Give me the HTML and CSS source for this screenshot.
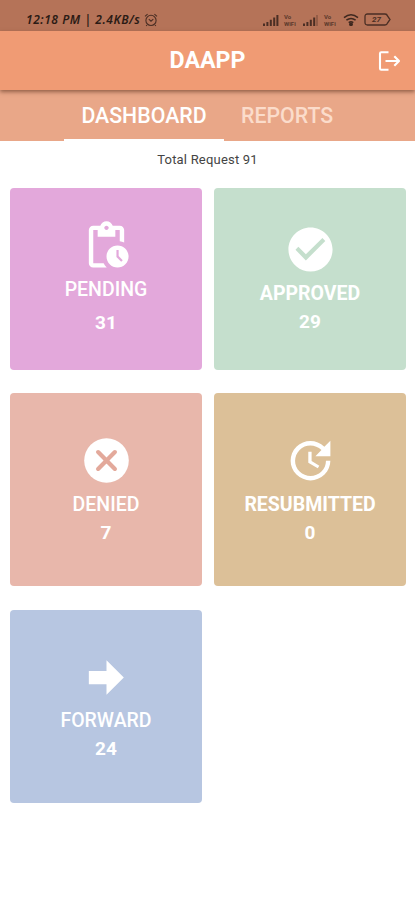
FILE: index.html
```html
<!DOCTYPE html>
<html lang="en">
<head>
<meta charset="utf-8">
<title>DAAPP</title>
<link rel="stylesheet" href="styles.css">
</head>
<body>
<div class="status">
  <span class="clock">12:18 PM | 2.4KB/s</span>
  <svg class="alarm" viewBox="0 0 14 14"><circle cx="7" cy="7.4" r="5.1"/><path d="M1 3.4 3.6 1.2M13 3.4 10.4 1.2M4.8 6.2 7 8.2 9.3 6.2M3 12 2.2 13M11 12l.8 1"/></svg>
  <div class="signals">
    <svg class="bars" viewBox="0 0 16 12"><path d="M0 9.5h2V12H0zM3.4 8h2v4h-2zM6.8 5.8h2V12h-2zM10.2 3.4h2V12h-2zM13.4 1h2v11h-2z"/></svg>
    <span class="vo"><span>Vo</span><span>WiFi</span></span>
    <svg class="bars" viewBox="0 0 16 12"><path d="M0 9.5h2V12H0zM3.4 8h2v4h-2zM6.8 5.8h2V12h-2zM10.2 3.4h2V12h-2z"/><path opacity=".5" d="M13.4 1h1.2v11h-1.2z"/></svg>
    <span class="vo"><span>Vo</span><span>WiFi</span></span>
    <svg class="wifi" viewBox="0 0 16 13"><path d="M1 4.6Q8-1.2 15 4.6M3.4 7.2q4.6-3.6 9.2 0M5.7 9.6q2.3-1.7 4.6 0"/><circle cx="8" cy="11.2" r="1.2"/></svg>
    <svg class="battery" viewBox="0 0 27 13"><path d="M3.5 1h17.500q2 0 2.500 2l2.500 3.500-2.500 3.500q-.5 2-2.500 2H3.500Q1 12 1 9.500v-6Q1 1 3.500 1z"/><text x="12.500" y="9.300" text-anchor="middle">27</text></svg>
  </div>
</div>
<header class="appbar">
  <h1>DAAPP</h1>
  <svg class="logout" viewBox="0 0 24 22"><path d="M11.500 2.200H4.200q-1.200 0-1.200 1.200v15.200q0 1.200 1.200 1.200h7.300M8.500 11h13M17.300 6.200 22 11l-4.700 4.800"/></svg>
</header>
<nav class="tabs">
  <a class="tab active">DASHBOARD</a>
  <a class="tab reports">REPORTS</a>
</nav>
<p class="total">Total Request 91</p>
<main class="grid">
  <section class="card pending">
    <svg class="icon" viewBox="0 0 24 24"><path d="M17 12c-2.760 0-5 2.240-5 5s2.240 5 5 5 5-2.240 5-5-2.240-5-5-5zm1.650 7.350L16.500 17.200V14h1v2.790l1.850 1.850-.7.710zM18 3h-3.180C14.400 1.840 13.300 1 12 1S9.600 1.840 9.180 3H6c-1.100 0-2 .9-2 2v15c0 1.100.9 2 2 2h6.110c-.59-.57-1.070-1.250-1.420-2H6V5h2v3h8V5h2v5.080c.71.100 1.380.310 2 .600V5c0-1.100-.9-2-2-2zm-6 2c-.55 0-1-.45-1-1s.45-1 1-1 1 .45 1 1-.45 1-1 1z"/></svg>
    <span class="label">PENDING</span><span class="count">31</span>
  </section>
  <section class="card approved">
    <svg class="icon" viewBox="0 0 24 24"><path d="M12 2C6.500 2 2 6.500 2 12s4.500 10 10 10 10-4.500 10-10S17.500 2 12 2m-2.100 15-4.700-4.900 1.300-1.400 3.400 3.500 7.500-7.400 1.300 1.300L9.900 17z"/></svg>
    <span class="label">APPROVED</span><span class="count">29</span>
  </section>
  <section class="card denied">
    <svg class="icon" viewBox="0 0 24 24"><circle cx="12" cy="12" r="10.100"/><path class="cross" d="m8.200 8.200 7.600 7.600m0-7.600-7.600 7.600"/></svg>
    <span class="label">DENIED</span><span class="count">7</span>
  </section>
  <section class="card resubmitted">
    <svg class="icon" viewBox="0 0 24 24"><path d="M21 10.120h-6.780l2.740-2.820c-2.730-2.700-7.150-2.800-9.880-.1-2.730 2.710-2.730 7.080 0 9.790s7.150 2.710 9.880 0C18.320 15.650 19 14.080 19 12.100h2c0 1.980-.88 4.550-2.640 6.290-3.510 3.480-9.210 3.480-12.720 0-3.500-3.470-3.530-9.110-.02-12.580s9.140-3.470 12.650 0L21 3v7.120zM12.500 8v4.250l3.500 2.080-.72 1.210L11 13V8h1.500z"/></svg>
    <span class="label">RESUBMITTED</span><span class="count">0</span>
  </section>
  <section class="card forward">
    <svg class="icon" viewBox="0 0 24 24"><path d="M4 15V9h8V4.160L19.840 12 12 19.840V15H4z"/></svg>
    <span class="label">FORWARD</span><span class="count">24</span>
  </section>
</main>
</body>
</html>
```
FILE: styles.css
```css
* { box-sizing: border-box; }
body { margin: 0; background: #fff; font-family: Roboto, sans-serif; height: 900px; overflow: hidden; }
.status { height: 31px; background: #b57358; display: flex; align-items: center; padding: 8px 24px 0 26px; color: #2b1b15; }
.clock { font: italic 600 12px/14px "Noto Sans", sans-serif; letter-spacing: .55px; width: 118px; white-space: nowrap; }
.alarm { width: 14px; height: 14px; fill: none; stroke: #4a2e24; stroke-width: 1.1; }
.signals { margin-left: auto; display: flex; align-items: center; gap: 5px; }
.bars { width: 16px; height: 12px; fill: #4a2e24; }
.vo { display: flex; flex-direction: column; width: 14px; font: 700 6px/7px Roboto, sans-serif; color: #5b392c; }
.wifi { width: 16px; height: 13px; fill: #3f281f; stroke: #3f281f; stroke-width: 1.5; }
.wifi path { fill: none; }
.battery { width: 27px; height: 13px; fill: none; stroke: #4a2e24; stroke-width: 1.3; }
.battery text { font: italic 700 8px Roboto, sans-serif; fill: #4a2e24; stroke: none; }
.appbar { position: relative; z-index: 1; height: 59px; background: #f09b74; display: grid; grid-template-columns: 1fr auto 1fr; align-items: center; box-shadow: 0 2px 4px rgba(90, 50, 30, .6); }
.appbar h1 { grid-column: 2; margin: 0; padding-bottom: 2px; font-size: 23.2px; line-height: 28px; font-weight: 700; color: #fff; }
.logout { width: 24px; height: 22px; justify-self: end; margin-right: 14px; fill: none; stroke: #fff; stroke-width: 2.1; stroke-linejoin: round; }
.tabs { height: 51px; background: #e9a788; display: flex; padding-left: 64px; }
.tab { height: 51px; line-height: 51px; font-size: 21.3px; font-weight: 500; color: #fbdccb; white-space: nowrap; }
.active { width: 160px; text-align: center; color: #fff; border-bottom: 2px solid #fff; }
.reports { padding-left: 17px; }
.total { margin: 0; height: 47px; padding-top: 11px; text-align: center; font-size: 13px; letter-spacing: .2px; line-height: 16px; color: #444; }
.grid { display: grid; grid-template-columns: 192px 192px; grid-template-rows: 182px 193px 193px; column-gap: 12px; row-gap: 23px; padding-left: 10px; }
.card { border-radius: 4px; display: flex; flex-direction: column; align-items: center; color: #fff; }
.icon { width: 53px; height: 53px; fill: #fff; flex: none; }
.label { font-size: 19.500px; line-height: 24px; font-weight: 500; }
.count { font-size: 19px; line-height: 24px; font-weight: 700; }
.pending { background: #e3a8db; padding-top: 31px; }
.pending .label { margin-top: 6px; }
.pending .count { margin-top: 9px; }
.approved { background: #c5dfcd; padding-top: 35px; }
.approved .label { margin-top: 6px; font-weight: 700; }
.approved .count { margin-top: 4px; }
.denied { background: #e8b7ab; }
.denied, .resubmitted { padding-top: 41px; }
.denied .label, .resubmitted .label { margin-top: 6px; }
.denied .count, .resubmitted .count { margin-top: 4px; }
.cross { stroke: #e3a99b; stroke-width: 1.900; stroke-linecap: round; }
.resubmitted { background: #dcc098; }
.resubmitted .label { font-weight: 700; }
.forward { background: #b7c6e1; padding-top: 41px; margin-top: 1px; margin-bottom: -1px; }
.forward .label { margin-top: 5px; }
.forward .count { margin-top: 4px; }
```
